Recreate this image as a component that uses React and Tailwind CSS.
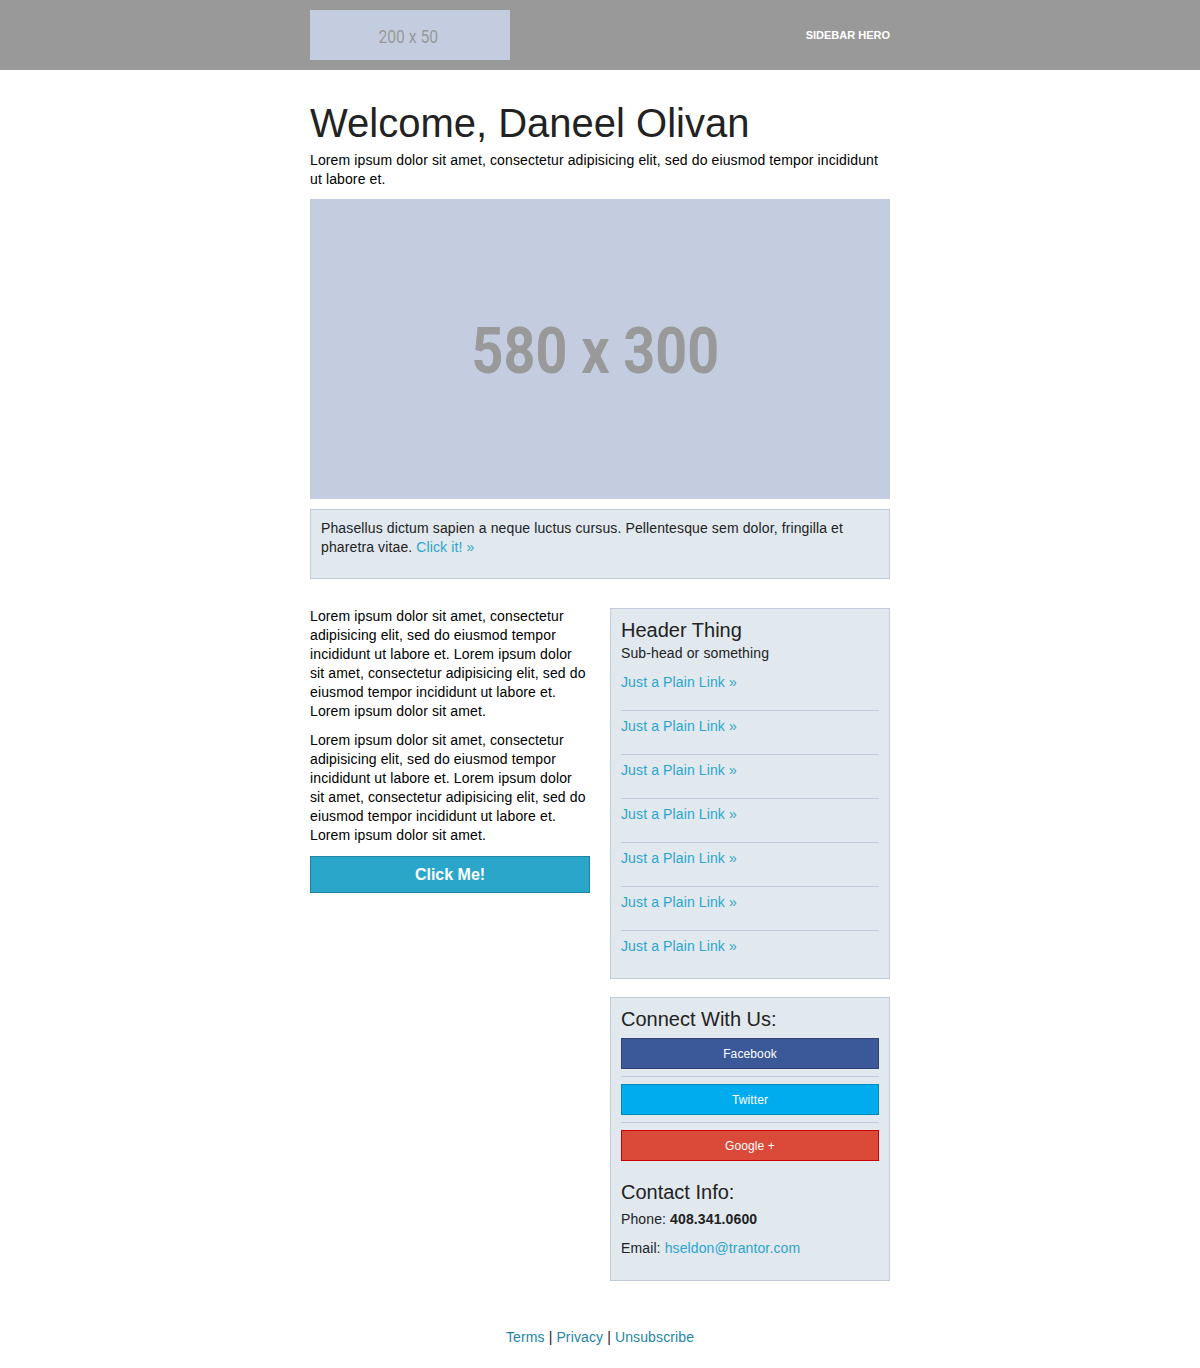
const links = Array.from({ length: 7 }, (_, i) => i)

function Panel({ children, className = '' }) {
  return (
    <div className={`bg-[#e1e8ee] border border-[#c1cbdc] px-[10px] pt-[10px] ${className}`}>
      {children}
    </div>
  )
}

function SocialButton({ label, bg, border }) {
  return (
    <div className={`h-[31px] border ${bg} ${border} flex items-center justify-center text-white text-[12px]`}>
      {label}
    </div>
  )
}

export default function App() {
  return (
    <div className="bg-white text-[#222222] font-['Liberation_Sans',Arial,sans-serif] tracking-[0.12px] min-h-[1368px]">
      {/* Header */}
      <div className="bg-[#999999] h-[70px]">
        <div className="w-[580px] mx-auto flex items-center justify-between py-[10px]">
          <div className="w-[200px] h-[50px] bg-[#c4cde0] flex items-center justify-center text-[#999999] text-[18px] font-['Roboto',sans-serif] tracking-normal pt-[3px] pr-[4px]">
            <span className="inline-block scale-x-[0.87]">200 x 50</span>
          </div>
          <span className="text-white text-[11px] font-bold tracking-normal">SIDEBAR HERO</span>
        </div>
      </div>

      {/* Body */}
      <div className="w-[580px] mx-auto">
        <h1 className="text-[40px] leading-[40px] mt-[33px] text-[#222222] tracking-normal">Welcome, Daneel Olivan</h1>
        <p className="text-[14px] leading-[19px] mt-[8px] text-black">
          Lorem ipsum dolor sit amet, consectetur adipisicing elit, sed do eiusmod tempor incididunt ut labore et.
        </p>

        <div className="mt-[10px] h-[300px] bg-[#c4cde0] flex items-center justify-center text-[#999999] text-[64px] font-bold font-['Roboto',sans-serif] tracking-normal pt-[6px] pr-[10px]">
          <span className="inline-block scale-x-[0.87]">580 x 300</span>
        </div>

        <div className="mt-[10px] bg-[#e1e8ee] border border-[#c1cbdc] px-[10px] pt-[9px] pb-[21px] text-[14px] leading-[19px]">
          Phasellus dictum sapien a neque luctus cursus. Pellentesque sem dolor, fringilla et pharetra vitae.{' '}
          <span className="text-[#2ba6cb]">Click it! »</span>
        </div>

        {/* Columns */}
        <div className="mt-[28px] flex gap-[20px] items-start">
          <div className="w-[280px] text-[14px] leading-[19px] text-black">
            <p>
              Lorem ipsum dolor sit amet, consectetur adipisicing elit, sed do eiusmod tempor incididunt ut labore et. Lorem ipsum dolor sit amet, consectetur adipisicing elit, sed do eiusmod tempor incididunt ut labore et. Lorem ipsum dolor sit amet.
            </p>
            <p className="mt-[10px]">
              Lorem ipsum dolor sit amet, consectetur adipisicing elit, sed do eiusmod tempor incididunt ut labore et. Lorem ipsum dolor sit amet, consectetur adipisicing elit, sed do eiusmod tempor incididunt ut labore et. Lorem ipsum dolor sit amet.
            </p>
            <div className="mt-[11px] h-[37px] bg-[#2ba6cb] border border-[#2284a1] flex items-center justify-center text-white text-[16px] font-bold tracking-normal">
              Click Me!
            </div>
          </div>

          <div className="w-[280px] mt-[1px]">
            <Panel className="pb-[22px]">
              <h3 className="text-[20px] leading-[24px] -mt-[1px] tracking-normal">Header Thing</h3>
              <p className="text-[14px] leading-[19px] mt-[2px]">Sub-head or something</p>
              <div className="mt-[10px]">
                {links.map(i => (
                  <div key={i}>
                    {i > 0 && <div className="h-px bg-[#c1cbdc] mt-[18px] mb-[6px]" />}
                    <p className="text-[14px] leading-[19px] text-[#2ba6cb]">Just a Plain Link »</p>
                  </div>
                ))}
              </div>
            </Panel>

            <Panel className="mt-[18px] pb-[22px]">
              <h3 className="text-[20px] leading-[24px] -mt-[1px] tracking-normal">Connect With Us:</h3>
              <div className="mt-[7px]">
                <SocialButton label="Facebook" bg="bg-[#3b5998]" border="border-[#2d4473]" />
                <div className="h-px bg-[#c1cbdc] my-[7px]" />
                <SocialButton label="Twitter" bg="bg-[#00acee]" border="border-[#0087bb]" />
                <div className="h-px bg-[#c1cbdc] my-[7px]" />
                <SocialButton label="Google +" bg="bg-[#db4a39]" border="border-[#cc0000]" />
              </div>
              <h3 className="text-[20px] leading-[24px] mt-[19px] tracking-normal">Contact Info:</h3>
              <p className="text-[14px] leading-[19px] mt-[6px]">
                Phone: <b>408.341.0600</b>
              </p>
              <p className="text-[14px] leading-[19px] mt-[10px]">
                Email: <span className="text-[#2ba6cb]">hseldon@trantor.com</span>
              </p>
            </Panel>
          </div>
        </div>

        {/* Footer */}
        <p className="text-center text-[14px] leading-[19px] mt-[47px] pb-[30px]">
          <span className="text-[#1d86a6]">Terms</span> | <span className="text-[#1d86a6]">Privacy</span> | <span className="text-[#1d86a6]">Unsubscribe</span>
        </p>
      </div>
    </div>
  )
}
